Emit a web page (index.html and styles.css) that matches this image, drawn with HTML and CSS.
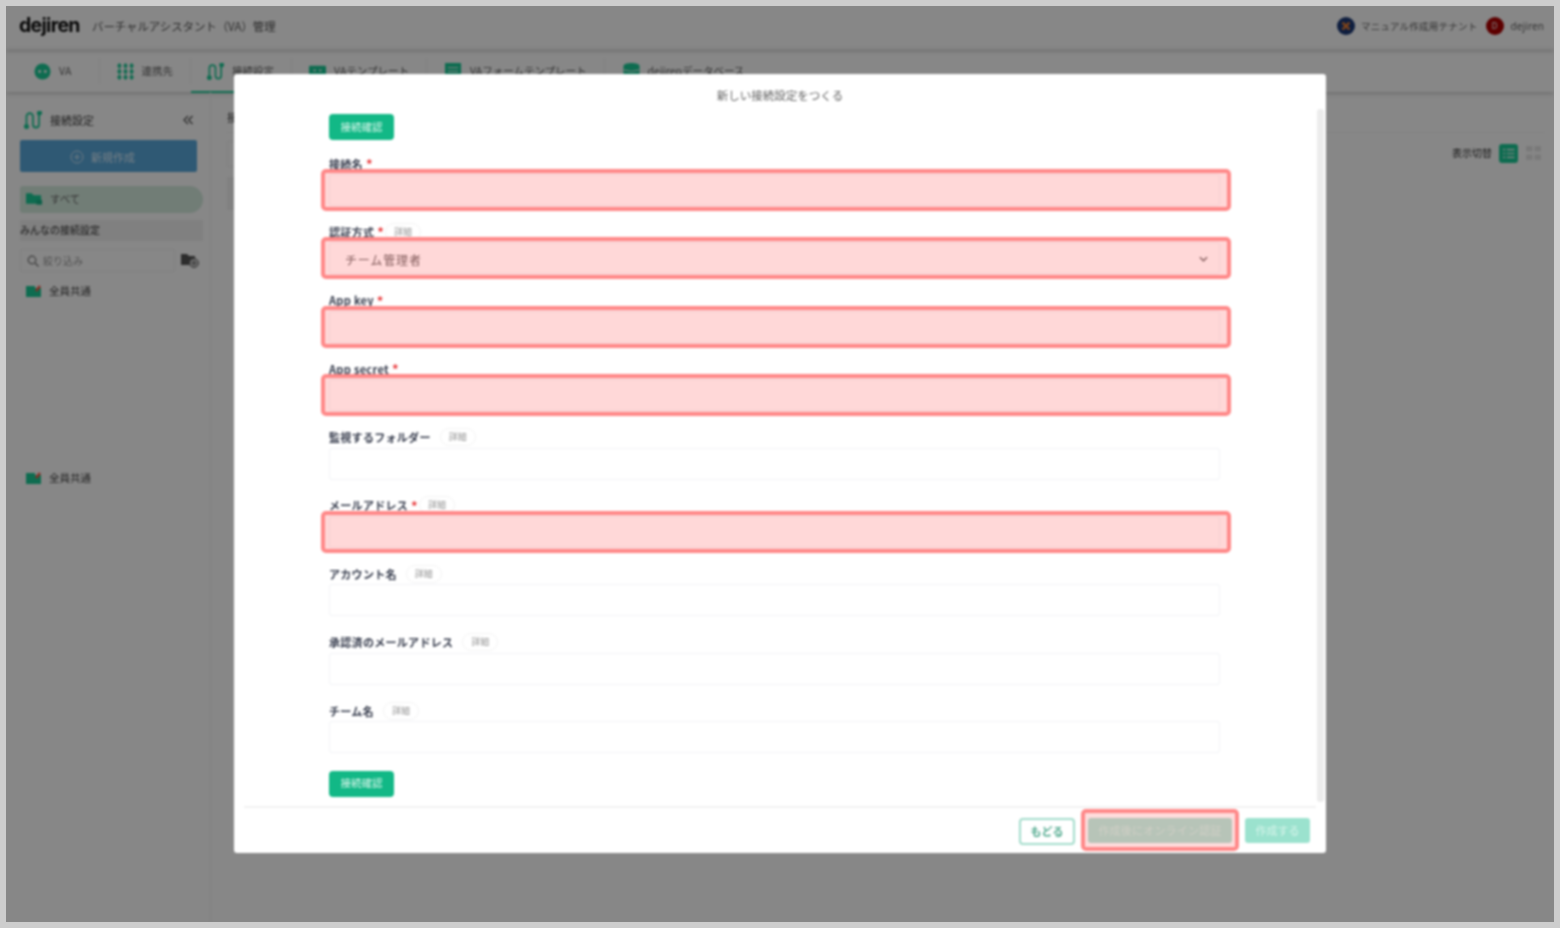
FILE: index.html
```html
<!DOCTYPE html>
<html lang="ja">
<head>
<meta charset="utf-8">
<title>dejiren</title>
<link rel="stylesheet" href="styles.css">
</head>
<body>
<div class="frame">
<div class="screen">
  <header class="topbar">
    <div class="brand"><span class="logo">dejiren</span><span class="subtitle">バーチャルアシスタント（VA）管理</span></div>
    <div class="account">
      <svg class="avatar" viewBox="0 0 18 18"><circle cx="9" cy="9" r="9" fill="#1c3a78"/><path d="M5.5 5.500l7 7M12.500 5.500l-7 7" stroke="#f08030" stroke-width="2.400"/></svg>
      <span class="tenant">マニュアル作成用テナント</span>
      <span class="avatar-d">D</span>
      <span class="user">dejiren</span>
    </div>
  </header>
  <nav class="tabs">
    <div class="tab first"><svg class="tab-icon" viewBox="0 0 18 18"><circle cx="9" cy="9" r="8.500" fill="#1ccc98"/><circle cx="6" cy="9" r="1.500" fill="#fff"/><circle cx="12" cy="9" r="1.500" fill="#fff"/></svg><span>VA</span></div>
    <div class="tab tight"><svg class="tab-icon" viewBox="0 0 18 18" fill="none" stroke="#1ccc98" stroke-width="1"><path d="M2.500 0v18M9 0v18M15.500 0v18"/><g fill="#1ccc98" stroke="none"><circle cx="2.500" cy="3" r="2.100"/><circle cx="2.500" cy="9" r="2.100"/><circle cx="2.500" cy="15" r="2.100"/><circle cx="9" cy="3" r="2.100"/><circle cx="9" cy="9" r="2.100"/><circle cx="9" cy="15" r="2.100"/><circle cx="15.500" cy="3" r="2.100"/><circle cx="15.500" cy="9" r="2.100"/><circle cx="15.500" cy="15" r="2.100"/></g></svg><span>連携先</span></div>
    <div class="tab tight active"><svg class="tab-icon" viewBox="0 0 18 18" fill="none" stroke="#1ccc98" stroke-width="1.800"><path d="M2.500 15V5.500a3.200 3.200 0 0 1 6.500 0v8a3 3 0 0 0 6 0V3"/><circle cx="2.500" cy="15.500" r="1.700" fill="#1ccc98"/><circle cx="15.500" cy="2" r="1.700" fill="#1ccc98"/></svg><span>接続設定</span></div>
    <div class="tab"><svg class="tab-icon" viewBox="0 0 18 18"><rect y="3" width="18" height="14" rx="1" fill="#1ccc98"/><path d="M5 8h2M11 8h2" stroke="#fff" stroke-width="2"/></svg><span>VAテンプレート</span></div>
    <div class="tab"><svg class="tab-icon" viewBox="0 0 18 18"><rect y="0" width="17" height="17" fill="#1ccc98"/><path d="M3 5h11M3 9h11" stroke="#fff"/></svg><span>VAフォームテンプレート</span></div>
    <div class="tab"><svg class="tab-icon" viewBox="0 0 18 18"><ellipse cx="9" cy="3" rx="8.500" ry="3" fill="#1ccc98"/><rect x="0.500" y="3" width="17" height="13" fill="#1ccc98"/><path d="M1 7.500q8 3 16 0" stroke="#fff" fill="none"/></svg><span>dejirenデータベース</span></div>
  </nav>
  <div class="workspace">
    <aside class="sidebar">
      <div class="side-title">
        <svg class="side-title-icon" viewBox="0 0 18 18" fill="none" stroke="#1ccc98" stroke-width="1.800"><path d="M2.500 15V5.500a3.200 3.200 0 0 1 6.500 0v8a3 3 0 0 0 6 0V3"/><circle cx="2.500" cy="15.500" r="1.700" fill="#1ccc98"/><circle cx="15.500" cy="2" r="1.700" fill="#1ccc98"/></svg>
        <span class="side-title-text">接続設定</span>
        <svg class="collapse" viewBox="0 0 12 12" fill="none" stroke="#555" stroke-width="1.300"><path d="M6 2L2 6l4 4M10.500 2l-4 4 4 4"/></svg>
      </div>
      <button class="new-btn"><svg class="plus-icon" viewBox="0 0 14 14" fill="none" stroke="#cfe6f7"><circle cx="7" cy="7" r="6"/><path d="M7 4v6M4 7h6"/></svg>新規作成</button>
      <div class="all-row"><svg class="folder" viewBox="0 0 18 14"><path d="M0 1h6l2 2h8v9H0z" fill="#1ccc98"/><rect x="11" y="8" width="6" height="5" fill="#18b588"/></svg><span>すべて</span></div>
      <div class="section-row">みんなの接続設定</div>
      <div class="filter-row">
        <div class="filter"><svg class="search" viewBox="0 0 12 12" fill="none" stroke="#777" stroke-width="1.200"><circle cx="5" cy="5" r="3.800"/><path d="M8 8l3.500 3.500"/></svg><span>絞り込み</span></div>
        <svg class="add-folder" viewBox="0 0 18 14"><path d="M0 0h6l2 2h6v9H0z" fill="#555"/><circle cx="13" cy="9" r="4.500" fill="#ccc" stroke="#666"/><path d="M13 6.500v5M10.500 9h5" stroke="#666"/></svg>
      </div>
      <div class="shared first"><svg class="shared-icon" viewBox="0 0 16 12"><path d="M0 1h9v2h6v9H0z" fill="#1ccc98"/><path d="M10 6l4-5" stroke="#ff5a48" stroke-width="2.600"/></svg><span>全員共通</span></div>
      <div class="shared second"><svg class="shared-icon" viewBox="0 0 16 12"><path d="M0 1h9v2h6v9H0z" fill="#1ccc98"/><path d="M10 6l4-5" stroke="#ff5a48" stroke-width="2.600"/></svg><span>全員共通</span></div>
    </aside>
    <main class="content">
      <div class="crumb">接続設定</div>
      <div class="list-head">
        <div class="cards">
          <div class="card"></div>
          <div class="card filled"></div>
        </div>
        <div class="view-switch">
          <span class="view-label">表示切替</span>
          <span class="view-on"><svg viewBox="0 0 12 12" stroke="#fff" stroke-width="1.100"><path d="M1 2.500h2M4.500 2.500h7M1 6h2M4.500 6h7M1 9.500h2M4.500 9.500h7"/></svg></span>
          <svg class="view-off" viewBox="0 0 18 18" fill="#e4e4e4"><rect x="2" y="2" width="6" height="5"/><rect x="10" y="2" width="6" height="5"/><rect x="2" y="10" width="6" height="5"/><rect x="10" y="10" width="6" height="5"/></svg>
        </div>
      </div>
    </main>
  </div>
  <div class="dim"></div>
  <section class="modal">
    <h2 class="modal-title">新しい接続設定をつくる</h2>
    <div class="modal-body">
      <div class="form">
        <button class="check-btn">接続確認</button>
        <div class="field">
          <div class="label">接続名<em>*</em></div>
          <div class="input-wrap marked"><div class="input"></div></div>
        </div>
        <div class="field">
          <div class="label">認証方式<em>*</em><span class="detail">詳細</span></div>
          <div class="input-wrap marked"><div class="input select"><span>チーム管理者</span><svg class="chevron" viewBox="0 0 10 6" fill="none" stroke="#555" stroke-width="1.500"><path d="M1 1l4 4 4-4"/></svg></div></div>
        </div>
        <div class="field">
          <div class="label">App key<em>*</em></div>
          <div class="input-wrap marked"><div class="input"></div></div>
        </div>
        <div class="field">
          <div class="label">App secret<em>*</em></div>
          <div class="input-wrap marked"><div class="input"></div></div>
        </div>
        <div class="field">
          <div class="label">監視するフォルダー<span class="detail">詳細</span></div>
          <div class="input-wrap"><div class="input"></div></div>
        </div>
        <div class="field">
          <div class="label">メールアドレス<em>*</em><span class="detail">詳細</span></div>
          <div class="input-wrap marked"><div class="input"></div></div>
        </div>
        <div class="field">
          <div class="label">アカウント名<span class="detail">詳細</span></div>
          <div class="input-wrap"><div class="input"></div></div>
        </div>
        <div class="field">
          <div class="label">承認済のメールアドレス<span class="detail">詳細</span></div>
          <div class="input-wrap"><div class="input"></div></div>
        </div>
        <div class="field last">
          <div class="label">チーム名<span class="detail">詳細</span></div>
          <div class="input-wrap"><div class="input"></div></div>
        </div>
        <button class="check-btn">接続確認</button>
      </div>
      <div class="scrollbar"></div>
    </div>
    <footer class="modal-footer">
      <button class="back-btn">もどる</button>
      <div class="online-wrap"><button class="online-btn">作成後にオンライン認証</button></div>
      <button class="create-btn">作成する</button>
    </footer>
  </section>
</div>
</div>
</body>
</html>
```
FILE: styles.css
```css
* { box-sizing: border-box; }
html, body { margin: 0; height: 100%; }
body {
  background: #cdcdcd;
  padding: 6px;
  font-family: "Noto Sans CJK JP", "Noto Sans", sans-serif;
  overflow: hidden;
}
button { font-family: inherit; border: 0; padding: 0 0 2px; }
.frame {
  width: 1548px;
  height: 916px;
  overflow: hidden;
  background: #878787;
}
.screen {
  position: relative;
  width: 1548px;
  height: 916px;
  background: #fff;
  overflow: hidden;
  display: flex;
  flex-direction: column;
  filter: blur(1px);
}
.topbar {
  height: 44px;
  flex: none;
  display: flex;
  align-items: center;
  justify-content: space-between;
  padding: 0 10px 4px 13px;
  box-shadow: 0 1px 4px rgba(0,0,0,.22);
  position: relative;
}
.brand { display: flex; align-items: center; }
.logo { font: 700 19.500px/1 "Inter", sans-serif; color: #111; letter-spacing: -.7px; width: 73px; }
.subtitle { font-size: 11.400px; color: #555; white-space: nowrap; }
.account { display: flex; align-items: center; font-size: 9.500px; color: #666; }
.avatar { width: 18px; height: 18px; }
.tenant { margin: 0 8px 0 6px; letter-spacing: .25px; }
.avatar-d {
  width: 18px; height: 18px; border-radius: 50%;
  background: #b00000; color: #eee; text-align: center; line-height: 18px; font-size: 9px;
}
.user { margin-left: 7px; font-family: "Noto Sans", sans-serif; font-size: 10px; letter-spacing: .1px; }
.tabs {
  height: 42px;
  flex: none;
  display: flex;
  align-items: center;
  padding: 0 0 0 11px;
  box-shadow: 0 1px 5px rgba(0,0,0,.24);
  position: relative;
}
.tab {
  display: flex;
  align-items: center;
  gap: 8px;
  height: 26px;
  padding: 0 17.500px;
  font-size: 10.500px;
  color: #666;
  white-space: nowrap;
  position: relative;
  border-left: 1px solid #f4f4f4;
}
.tab.first { width: 82px; border-left: 0; padding: 0 17px; }
.tab.tight { padding: 0 16.500px; }
.tab span { padding-bottom: 2px; }
.tab.active::after {
  content: ""; position: absolute; left: 0; right: 0; bottom: -9px; height: 2px; background: #1ccc98;
}
.tab-icon { width: 17px; height: 17px; flex: none; }
.workspace { flex: 1; display: flex; min-height: 0; }
.sidebar {
  width: 205px;
  flex: none;
  border-right: 1px solid #f4f4f4;
  padding: 14px 7px 0 14px;
  position: relative;
}
.side-title { display: flex; align-items: center; height: 28px; padding-left: 4px; font-size: 11px; color: #444; }
.side-title-icon { width: 18px; height: 18px; }
.side-title-text { margin-left: 8px; flex: 1; }
.collapse { width: 12px; height: 12px; margin-right: 9px; }
.new-btn {
  display: flex; align-items: center; justify-content: center; gap: 7px;
  width: 177px; height: 32px; margin-top: 6px; padding: 1px 12px 0 0;
  background: #5aa9dc; color: #d9edfb; border-radius: 2px; font-size: 11px;
}
.plus-icon { width: 14px; height: 14px; }
.all-row {
  display: flex; align-items: center; gap: 7px;
  height: 27px; margin-top: 14px; padding: 0 0 2px 6px;
  background: #d6ecdf; border-radius: 3px 14px 14px 3px; color: #666; font-size: 10.500px;
}
.folder { width: 17px; height: 14px; }
.section-row {
  height: 21px; margin-top: 7px; line-height: 20px;
  background: #f2f2f2; font-size: 10px; color: #555; font-weight: 500;
}
.filter-row { display: flex; align-items: center; gap: 6px; margin-top: 8px; }
.filter {
  width: 155px; height: 23px; display: flex; align-items: center; gap: 4px; padding-left: 6px;
  border: 1px solid #f2f2f2; border-radius: 2px; font-size: 10px; color: #999;
}
.search { width: 12px; height: 12px; }
.add-folder { width: 18px; height: 14px; }
.shared { display: flex; align-items: center; gap: 7px; padding-left: 6px; font-size: 10.500px; color: #444; }
.shared.first { margin-top: 11px; }
.shared.second { margin-top: 172px; }
.shared-icon { width: 16px; height: 12px; }
.content { flex: 1; padding: 17px 10px 0 16px; position: relative; }
.crumb { font-size: 11px; color: #444; height: 24px; border-bottom: 1px solid #f6f6f6; }
.list-head { display: flex; justify-content: space-between; align-items: flex-start; }
.cards { width: 200px; padding-top: 8px; }
.card { height: 26px; border: 1px solid #f4f4f4; }
.card.filled { height: 33px; margin-top: 10px; background: #f4f4f4; border: 0; }
.view-switch { display: flex; align-items: center; margin-top: 11px; padding-right: 1px; }
.view-label { font-size: 10px; color: #333; margin-right: 7px; padding-bottom: 2px; }
.view-on { width: 19px; height: 19px; background: #1ccc98; border-radius: 3px; padding: 3px; display: block; margin-right: 6px; }
.view-on svg { display: block; width: 13px; height: 13px; }
.view-off { width: 19px; height: 19px; }
.dim { position: absolute; inset: 0; background: rgba(0,0,0,.47); }
.modal {
  position: absolute; left: 228px; top: 68px;
  width: 1092px; height: 779px;
  background: #fff; border-radius: 3px;
  display: flex; flex-direction: column;
}
.modal-title { margin: 0; height: 35px; flex: none; padding-top: 13px; text-align: center; font-size: 11.500px; line-height: 17px; font-weight: 400; color: #666; }
.modal-body { flex: 1; min-height: 0; display: flex; padding-left: 95px; }
.form { width: 891px; padding-top: 5px; }
.scrollbar { width: 7px; height: 693px; margin-left: 97px; background: #ececec; border-radius: 3px; }
.check-btn {
  display: block; width: 65px; height: 26px; border-radius: 4px;
  background: #12b886; color: #d8f5ea; font-size: 10.500px;
}
.field { margin-top: 17px; height: 49px; }
.field + .field { margin-top: 19.400px; }
.field.last + .check-btn { margin-top: 17.800px; }
.label { display: flex; align-items: center; height: 14px; padding-bottom: 1px; font-size: 11px; letter-spacing: .3px; font-weight: 700; color: #33394a; white-space: nowrap; }
.label em { color: #e8383a; font-style: normal; font-size: 13px; line-height: 1; margin-left: 3px; }
.detail {
  margin-left: 9px; padding: 0 8px; height: 18px; line-height: 16px;
  border: 1px solid #f4f4f4; border-radius: 9px;
  font-size: 9px; font-weight: 400; letter-spacing: 0; color: #999;
}
.label em + .detail { margin-left: 1px; }
.input-wrap { position: relative; margin-top: 3px; }
.input {
  height: 32px; border: 1px solid #f2f3f7; border-radius: 3px; background: #fff;
  position: relative;
}
.select {
  display: flex; align-items: center; justify-content: space-between;
  padding: 2px 11px 0 15px; font-size: 12px; color: #555; letter-spacing: .85px;
}
.chevron { width: 9px; height: 6px; }
.marked::after {
  content: ""; position: absolute; left: -8px; right: -11px; top: -5px; bottom: -5px;
  border: 4px solid #ff8888; border-radius: 5px; background: rgba(255,110,110,.27);
}
.modal-footer {
  height: 47px; flex: none; margin: 0 10px; padding: 10px 6px 0 0;
  border-top: 2px solid #f2f2f2;
  display: flex; justify-content: flex-end; align-items: flex-start; gap: 13px;
}
.back-btn {
  width: 56px; height: 27px; background: #fff; border: 2px solid #a3dccb; border-radius: 4px;
  font-size: 11px; font-weight: 700; color: #4fa98d;
}
.online-wrap { position: relative; }
.online-wrap::before {
  content: ""; position: absolute; left: -7px; right: -7px; top: -9px; bottom: -8px;
  border: 4px solid #ff8888; border-radius: 5px; background: #ffdcdc;
}
.online-btn {
  position: relative; display: block; width: 144px; height: 25px; border-radius: 3px;
  background: #b7c4b8; color: #d0cfc6; font-size: 11px; letter-spacing: .2px;
}
.create-btn { width: 65px; height: 25px; border-radius: 3px; background: #9be2ce; color: #d6f4ea; font-size: 11px; }
```
